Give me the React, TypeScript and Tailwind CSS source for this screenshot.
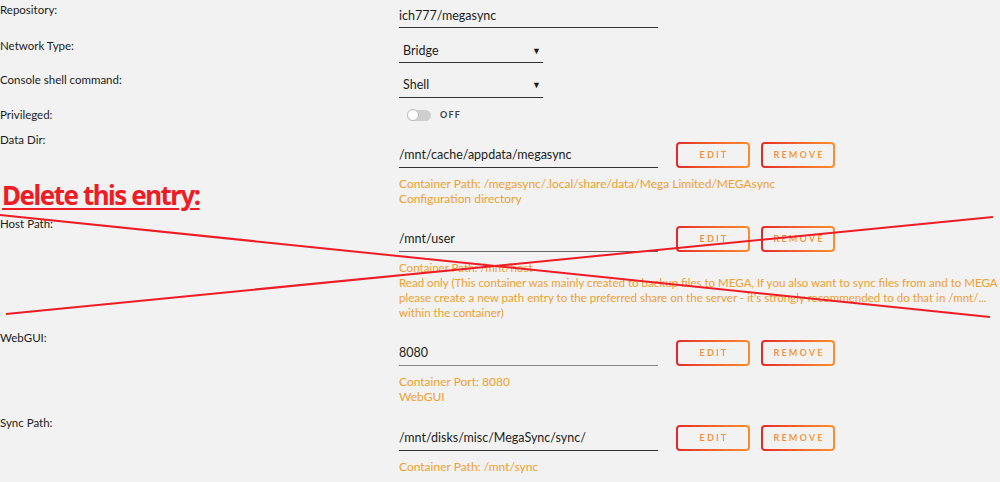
import React from "react";

const font = { fontFamily: "Lato, 'Open Sans', sans-serif" };

function Btn({ label }: { label: string }) {
  return (
    <div className="rounded-[4px] bg-gradient-to-r from-[#e22828] to-[#ff8c2f] p-[2px] w-[74px] h-[26px]">
      <div className="w-full h-full rounded-[2px] bg-[#f2f2f2] flex items-center justify-center">
        <span className="bg-gradient-to-r from-[#f4873a] to-[#ff9a3a] bg-clip-text text-transparent text-[9px] font-bold tracking-[2.2px] pl-[2px]">
          {label}
        </span>
      </div>
    </div>
  );
}

function PathRow({
  label,
  value,
  hints,
  line = "border-[#333]",
  mb = "mb-[10px]",
  hintSize = "text-[12px]",
}: {
  label: string;
  value: string;
  hints: string[];
  line?: string;
  mb?: string;
  hintSize?: string;
}) {
  return (
    <div className={`flex ${mb}`}>
      <div className="w-[399px] shrink-0 text-[11.5px] leading-[16px] text-[#1c1c1c]">{label}</div>
      <div className="flex flex-col pt-[10px] w-[600px]">
        <div className="flex items-start">
          <div className={`w-[259px] h-[26px] border-b ${line} text-[12.5px] leading-[26px] text-[#1c1c1c]`}>
            {value}
          </div>
          <div className="ml-[18px] flex gap-[11px]">
            <Btn label="EDIT" />
            <Btn label="REMOVE" />
          </div>
        </div>
        <div className={`mt-[8px] ${hintSize} leading-[15px] text-[#f0a030] whitespace-nowrap`}>
          {hints.map((h, i) => (
            <div key={i}>{h}</div>
          ))}
        </div>
      </div>
    </div>
  );
}

export default function App() {
  return (
    <div className="relative w-[1000px] h-[482px] bg-[#f2f2f2] overflow-hidden" style={font}>
      <div className="flex flex-col pt-[2px]">
        {/* Repository */}
        <div className="flex h-[36px]">
          <div className="w-[399px] shrink-0 text-[11.5px] leading-[16px] text-[#1c1c1c]">Repository:</div>
          <div className="w-[259px] h-[26px] border-b border-[#333] text-[12.5px] leading-[28px] text-[#1c1c1c]">
            ich777/megasync
          </div>
        </div>
        {/* Network */}
        <div className="flex h-[34px]">
          <div className="w-[399px] shrink-0 text-[11.5px] leading-[16px] text-[#1c1c1c]">Network Type:</div>
          <div className="w-[144px] h-[25px] border-b border-[#333] text-[12.5px] leading-[25px] text-[#1c1c1c] pl-[4px] flex justify-between pr-[2px]">
            <span>Bridge</span>
            <span className="text-[9px]">▼</span>
          </div>
        </div>
        {/* Console */}
        <div className="flex h-[35px]">
          <div className="w-[399px] shrink-0 text-[11.5px] leading-[16px] text-[#1c1c1c]">Console shell command:</div>
          <div className="w-[144px] h-[26px] border-b border-[#333] text-[12.5px] leading-[26px] text-[#1c1c1c] pl-[4px] flex justify-between pr-[2px]">
            <span>Shell</span>
            <span className="text-[9px]">▼</span>
          </div>
        </div>
        {/* Privileged */}
        <div className="flex h-[25px]">
          <div className="w-[399px] shrink-0 text-[11.5px] leading-[16px] text-[#1c1c1c]">Privileged:</div>
          <div className="flex items-center h-[16px] pl-[8px] gap-[9px]">
            <div className="relative w-[24px] h-[11px] rounded-full bg-[#cfcfcf]">
              <div className="absolute left-0 top-[-0.5px] w-[12px] h-[12px] rounded-full bg-white border border-[#bdbdbd]" />
            </div>
            <span className="text-[9px] font-bold tracking-[1.2px] text-[#444]">OFF</span>
          </div>
        </div>

        <PathRow
          label="Data Dir:"
          value="/mnt/cache/appdata/megasync"
          hints={["Container Path: /megasync/.local/share/data/Mega Limited/MEGAsync", "Configuration directory"]}
        />
        <PathRow
          label="Host Path:"
          value="/mnt/user"
          line="border-[#666]"
          hintSize="text-[11.55px]"
          hints={[
            "Container Path: /mnt/host",
            "Read only (This container was mainly created to backup files to MEGA, If you also want to sync files from and to MEGA",
            "please create a new path entry to the preferred share on the server - it's strongly recommended to do that in /mnt/...",
            "within the container)",
          ]}
        />
        <PathRow
          label="WebGUI:"
          value="8080"
          line="border-[#888]"
          mb="mb-[11px]"
          hints={["Container Port: 8080", "WebGUI"]}
        />
        <PathRow label="Sync Path:" value="/mnt/disks/misc/MegaSync/sync/" hints={["Container Path: /mnt/sync"]} />
      </div>

      {/* annotation */}
      <div
        className="absolute left-[2px] top-[179px] text-[26px] leading-[32px] font-bold text-[#ee1c25] underline decoration-[2px] underline-offset-[3px] tracking-[-1.5px]"
        style={{ fontFamily: "'Noto Sans', sans-serif" }}
      >
        Delete this entry:
      </div>
      <svg className="absolute inset-0 pointer-events-none" width="1000" height="482" viewBox="0 0 1000 482">
        <line x1="0" y1="215" x2="990" y2="317" stroke="#ee1c25" strokeWidth="2" />
        <line x1="6" y1="314" x2="993" y2="217" stroke="#ee1c25" strokeWidth="2" />
      </svg>
    </div>
  );
}
